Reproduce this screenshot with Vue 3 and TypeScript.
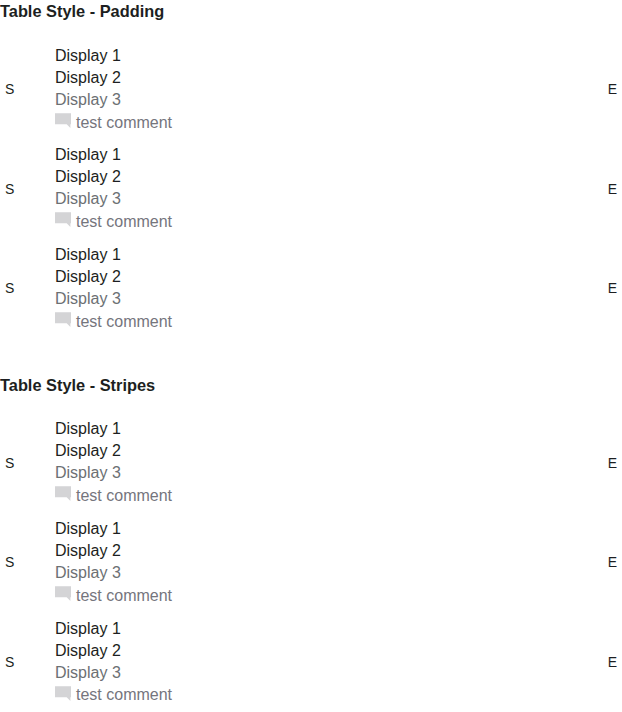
<script setup lang="ts">
interface Row { start: string; lines: string[]; comment: string; end: string }

const makeRow = (): Row => ({
  start: 'S',
  lines: ['Display 1', 'Display 2', 'Display 3'],
  comment: 'test comment',
  end: 'E',
})

const sections: { title: string; rows: Row[] }[] = [
  { title: 'Table Style - Padding', rows: [makeRow(), makeRow(), makeRow()] },
  { title: 'Table Style - Stripes', rows: [makeRow(), makeRow(), makeRow()] },
]
</script>

<template>
  <main class="page">
    <section v-for="section in sections" :key="section.title" class="section">
      <h2 class="title">{{ section.title }}</h2>
      <div class="list">
        <div v-for="(row, i) in section.rows" :key="i" class="row">
          <div class="start">{{ row.start }}</div>
          <div class="content">
            <div v-for="(line, n) in row.lines" :key="line" class="line" :class="{ muted: n === 2 }">{{ line }}</div>
            <div class="comment">
              <svg class="icon" viewBox="0 0 16 16" width="16" height="16" aria-hidden="true">
                <path d="M0 .2h16v11h-.6v3.9l-3.7-3.9H0z" />
              </svg>
              <span class="comment-text">{{ row.comment }}</span>
            </div>
          </div>
          <div class="end">{{ row.end }}</div>
        </div>
      </div>
    </section>
  </main>
</template>

<style>
body { background: #fff; overflow: hidden; }
</style>

<style scoped>
.page {
  height: 712px;
  overflow: hidden;
  color: #1d1f21;
  font: 16px/22px "Liberation Sans", Arial, sans-serif;
}
.section { height: 373.6px; }
.title { margin: 0; font-size: 16.38px; line-height: 22px; font-weight: 700; }
.list { padding-top: 22.75px; }
.row { display: flex; align-items: flex-start; height: 99.6px; }
.start, .end { margin-top: 34.35px; padding: 0 5px; box-sizing: border-box; font-size: 14px; line-height: 20px; }
.start { width: 55px; }
.content { flex: 1; }
.muted { color: #6c7073; }
.comment { display: flex; align-items: flex-start; gap: 5px; color: #75757d; }
.comment-text { margin-top: 0.85px; }
.icon { margin-top: 2px; fill: #d4d4d6; }
</style>
